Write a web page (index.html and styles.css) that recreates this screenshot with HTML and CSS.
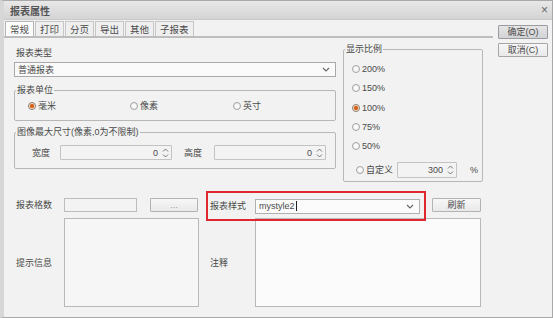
FILE: index.html
```html
<!DOCTYPE html>
<html lang="zh-CN">
<head>
<meta charset="utf-8">
<title>报表属性</title>
<link rel="stylesheet" href="styles.css">
</head>
<body>
<div class="dialog">
  <div class="titlebar">
    <span class="title">报表属性</span>
    <span class="close">×</span>
  </div>
  <div class="body">
    <div class="main">
      <div class="tabs">
        <span class="tab active">常规</span>
        <span class="tab">打印</span>
        <span class="tab">分页</span>
        <span class="tab">导出</span>
        <span class="tab">其他</span>
        <span class="tab">子报表</span>
      </div>
      <div class="panel">
        <div class="top">
          <div class="left">
            <div class="label type-label">报表类型</div>
            <div class="select type-select">
              <span>普通报表</span>
              <svg class="chev" width="8" height="5" viewBox="0 0 8 5"><path d="M1 1 L4 4 L7 1" fill="none" stroke="#666" stroke-width="1.1"/></svg>
            </div>
            <fieldset class="group unit">
              <legend>报表单位</legend>
              <div class="unit-row">
                <label class="radio"><span class="dot checked"></span>毫米</label>
                <label class="radio"><span class="dot"></span>像素</label>
                <label class="radio"><span class="dot"></span>英寸</label>
              </div>
            </fieldset>
            <fieldset class="group size">
              <legend>图像最大尺寸(像素,0为不限制)</legend>
              <div class="size-row">
                <span class="size-label">宽度</span>
                <div class="spin size-input"><span>0</span>
                  <svg class="arrows" width="7" height="12" viewBox="0 0 7 12"><path d="M1 4.5 L3.5 2 L6 4.5 M1 7.5 L3.5 10 L6 7.5" fill="none" stroke="#777" stroke-width="1"/></svg>
                </div>
                <span class="size-label second">高度</span>
                <div class="spin size-input"><span>0</span>
                  <svg class="arrows" width="7" height="12" viewBox="0 0 7 12"><path d="M1 4.5 L3.5 2 L6 4.5 M1 7.5 L3.5 10 L6 7.5" fill="none" stroke="#777" stroke-width="1"/></svg>
                </div>
              </div>
            </fieldset>
          </div>
          <fieldset class="group ratio">
            <legend>显示比例</legend>
            <div class="ratio-list">
              <label class="radio"><span class="dot"></span>200%</label>
              <label class="radio"><span class="dot"></span>150%</label>
              <label class="radio"><span class="dot checked"></span>100%</label>
              <label class="radio"><span class="dot"></span>75%</label>
              <label class="radio"><span class="dot"></span>50%</label>
              <div class="custom-row">
                <label class="radio"><span class="dot"></span>自定义</label>
                <div class="spin custom-input"><span>300</span>
                  <svg class="arrows" width="7" height="12" viewBox="0 0 7 12"><path d="M1 4.5 L3.5 2 L6 4.5 M1 7.5 L3.5 10 L6 7.5" fill="none" stroke="#777" stroke-width="1"/></svg>
                </div>
                <span class="pct">%</span>
              </div>
            </div>
          </fieldset>
        </div>
        <div class="row1">
          <span class="label field-label">报表格数</span>
          <div class="input count-input"></div>
          <button class="btn dots">...</button>
          <div class="highlight">
            <span class="label style-label">报表样式</span>
            <div class="select style-select">
              <span>mystyle2<span class="caret"></span></span>
              <svg class="chev" width="8" height="5" viewBox="0 0 8 5"><path d="M1 1 L4 4 L7 1" fill="none" stroke="#666" stroke-width="1.1"/></svg>
            </div>
          </div>
          <button class="btn refresh">刷新</button>
        </div>
        <div class="row2">
          <span class="label field-label">提示信息</span>
          <div class="textarea tip"></div>
          <span class="label style-label note">注释</span>
          <div class="textarea remark"></div>
        </div>
      </div>
    </div>
    <div class="side">
      <button class="btn side-btn primary">确定(O)</button>
      <button class="btn side-btn">取消(C)</button>
    </div>
  </div>
</div>
</body>
</html>
```

FILE: styles.css
```css
* {
  box-sizing: border-box;
  margin: 0;
}

html, body {
  margin: 0;
  padding: 0;
  background: #f1f2f1;
}

body {
  font-family: "Liberation Sans", "Noto Sans CJK SC", sans-serif;
  font-size: 9px;
  color: #4a4a4a;
}

.dialog {
  width: 553px;
  height: 318px;
  border: 1px solid #a9a9a9;
  border-left: 4px solid #d6d7d6;
  background: #f1f2f1;
  display: flex;
  flex-direction: column;
  overflow: hidden;
}

.titlebar {
  height: 19px;
  margin-left: -4px;
  padding-left: 10px;
  padding-right: 4px;
  display: flex;
  align-items: center;
  justify-content: space-between;
  background: linear-gradient(#e8e8e8, #d4d4d4);
  border-bottom: 1px solid #c9c9c9;
}

.title {
  font-size: 10px;
  font-weight: bold;
  color: #555;
}

.close {
  font-size: 12px;
  color: #666;
  line-height: 12px;
}

.body {
  flex: 1;
  display: flex;
  border-left: 1px solid #b8b8b8;
  margin-left: -1px;
}

.main {
  width: 489px;
  display: flex;
  flex-direction: column;
}

.tabs {
  height: 18px;
  padding-left: 1px;
  padding-top: 1px;
  display: flex;
  border-bottom: 2px solid #bdbdbd;
  background: #f1f2f1;
}

.tab {
  height: 15px;
  padding: 0 4px;
  margin-right: 1px;
  display: flex;
  align-items: center;
  border: 1px solid #c6c6c6;
  border-bottom: none;
  background: #efefef;
  font-size: 9.5px;
  color: #4a4a4a;
}

.tab.active {
  background: #fcfcfc;
  border-color: #b5b5b5;
}

.panel {
  flex: 1;
  padding: 5px 0 0 10px;
}

.top {
  display: flex;
  gap: 7px;
}

.left {
  width: 322px;
  display: flex;
  flex-direction: column;
}

.label {
  line-height: 12px;
  color: #4a4a4a;
}

.type-label {
  margin-top: 4px;
  margin-left: 2px;
}

.select {
  height: 15px;
  border: 1px solid #a9a9a9;
  background: #fafafa;
  display: flex;
  align-items: center;
  justify-content: space-between;
  padding: 0 5px 0 3px;
}

.type-select {
  margin-top: 3px;
}

.group {
  border: 1px solid #b7b7b7;
  border-radius: 2px;
  padding: 0;
  min-inline-size: 0;
}

.group legend {
  line-height: 12px;
  padding: 0 1px;
  margin-left: 1px;
  color: #4a4a4a;
}

.unit {
  margin-top: 7px;
  padding: 4px 0 8px 0;
}

.unit-row {
  padding-left: 13px;
  display: grid;
  grid-template-columns: 102px 103px 102px;
}

.radio {
  display: flex;
  align-items: center;
  line-height: 12px;
  height: 12px;
  color: #4a4a4a;
}

.dot {
  width: 8px;
  height: 8px;
  border-radius: 50%;
  border: 1px solid #a3a3a3;
  background: radial-gradient(circle, #ffffff 0, #ececec 100%);
  margin-right: 2px;
  flex: none;
}

.dot.checked {
  border-color: #8c7a6a;
  background: radial-gradient(circle, #d4651a 0 1.8px, #f3d6bc 2.4px, #ffffff 3.2px);
}

.size {
  margin-top: 5px;
  padding: 7px 0 8px 0;
}

.size-row {
  padding-left: 17px;
  display: flex;
  align-items: center;
}

.size-label {
  width: 28px;
}

.size-label.second {
  width: 30px;
  margin-left: 12px;
}

.spin {
  height: 15px;
  border: 1px solid #c3c3c3;
  border-radius: 1px;
  background: #f3f3f3;
  display: flex;
  align-items: center;
  justify-content: flex-end;
  gap: 4px;
  padding-right: 2px;
  color: #4a4a4a;
}

.size-input {
  width: 112px;
}

.ratio {
  width: 140px;
  height: 139px;
  padding: 8px 0 4px 0;
}

.ratio-list {
  padding-left: 8px;
  display: flex;
  flex-direction: column;
  gap: 7.3px;
}

.custom-row {
  margin-top: 3px;
  height: 16px;
  display: flex;
  align-items: center;
  padding-left: 4px;
}

.custom-row .radio {
  width: 41px;
}

.custom-input {
  width: 60px;
  height: 16px;
}

.pct {
  margin-left: 13px;
}

.row1 {
  margin-top: 9px;
  height: 27px;
  display: flex;
  align-items: flex-start;
}

.field-label {
  width: 48px;
  margin-left: 2px;
}

.row1 .field-label {
  margin-top: 8px;
}

.input {
  height: 14px;
  border: 1px solid #bcbcbc;
  background: #f3f3f3;
}

.count-input {
  width: 73px;
  margin-top: 7px;
}

.btn {
  font-family: "Liberation Sans", "Noto Sans CJK SC", sans-serif;
  font-size: 9px;
  color: #4a4a4a;
  height: 14px;
  padding: 0;
  border: 1px solid #b3b3b3;
  border-radius: 1px;
  background: linear-gradient(#f7f7f7, #e9e9e9);
  line-height: 12px;
}

.dots {
  width: 48px;
  margin-top: 7px;
  margin-left: 13px;
  color: #999;
}

.highlight {
  width: 220px;
  height: 30px;
  margin-left: 8px;
  margin-bottom: -3px;
  border: 2px solid #e0262e;
  display: flex;
  align-items: center;
  padding-left: 2px;
  position: relative;
  z-index: 1;
}

.style-label {
  width: 45px;
}

.style-select {
  width: 165px;
  background: #fbfbfb;
  border-color: #b0b0b0;
}

.caret {
  display: inline-block;
  width: 1px;
  height: 10px;
  background: #222;
  vertical-align: -2px;
  margin-left: 1px;
}

.refresh {
  width: 49px;
  margin-top: 7px;
  margin-left: 6px;
}

.row2 {
  height: 89px;
  display: flex;
  align-items: center;
}

.textarea {
  height: 89px;
  border: 1px solid #b9b9b9;
  background: #f6f6f6;
}

.tip {
  width: 135px;
}

.note {
  margin-left: 11px;
}

.remark {
  width: 226px;
  background: #fbfbfb;
}

.side {
  margin-left: 5px;
  padding-top: 5px;
  display: flex;
  flex-direction: column;
  gap: 4px;
}

.side-btn {
  width: 50px;
  height: 14px;
  border-color: #a6a6a6;
}

.side-btn.primary {
  background: linear-gradient(#e6e6e6, #d2d3d6);
  border-color: #9a9aa0;
}
```
